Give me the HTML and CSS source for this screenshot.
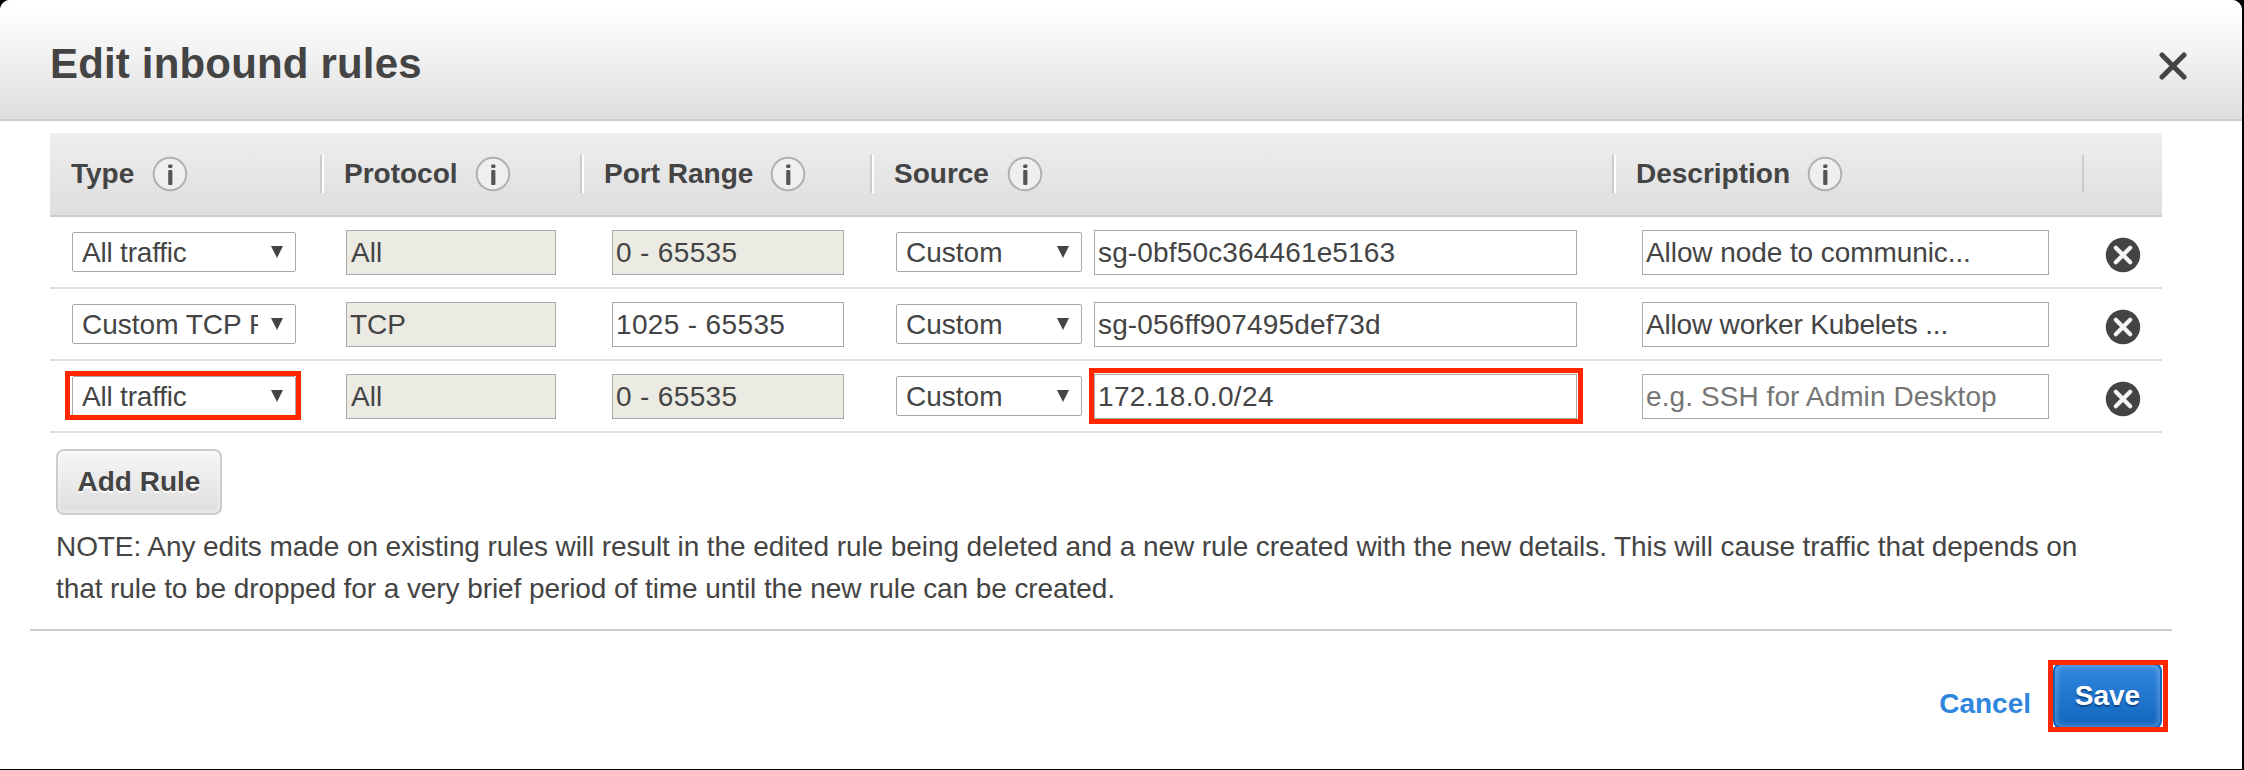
FILE: index.html
```html
<!DOCTYPE html>
<html lang="en">
<head>
<meta charset="utf-8">
<title>Edit inbound rules</title>
<link rel="stylesheet" href="styles.css">
</head>
<body>
<svg class="defs" width="0" height="0" aria-hidden="true">
  <symbol id="info" viewBox="0 0 36 36">
    <circle cx="18" cy="18" r="16.3" fill="#efefef" stroke="#b0b0b0" stroke-width="2"/>
    <rect x="16.2" y="8.5" width="4.2" height="3.6" rx="1" fill="#555"/>
    <rect x="16.2" y="14" width="4.2" height="15" rx="1" fill="#555"/>
  </symbol>
  <symbol id="remove" viewBox="0 0 36 36">
    <circle cx="18" cy="18" r="17.2" fill="#444"/>
    <path d="M10.8 10.8L25.2 25.2M25.2 10.8L10.8 25.2" stroke="#f4f4f4" stroke-width="4.2" stroke-linecap="round"/>
  </symbol>
  <symbol id="arrow" viewBox="0 0 12 12">
    <path d="M0 0H12L6 12Z" fill="#444"/>
  </symbol>
</svg>
<div class="dialog">
  <header class="dialog-header">
    <h1 class="title">Edit inbound rules</h1>
    <svg class="close" viewBox="0 0 28 28"><path d="M3 3L25 25M25 3L3 25" stroke="#444" stroke-width="5" stroke-linecap="round"/></svg>
  </header>
  <main class="dialog-body">
    <div class="table">
      <div class="row head">
        <div class="th th-first"><span>Type</span><svg class="info"><use href="#info"/></svg></div>
        <div class="th"><span>Protocol</span><svg class="info"><use href="#info"/></svg></div>
        <div class="th"><span>Port Range</span><svg class="info"><use href="#info"/></svg></div>
        <div class="th th-source"><span>Source</span><svg class="info"><use href="#info"/></svg></div>
        <div class="th th-last"><span>Description</span><svg class="info"><use href="#info"/></svg></div>
        <div></div>
      </div>
      <div class="row">
        <div class="cell"><div class="select type"><span class="value tight">All traffic</span><svg class="arrow"><use href="#arrow"/></svg></div></div>
        <div class="cell"><div class="input disabled all">All</div></div>
        <div class="cell port"><div class="input disabled">0 - 65535</div></div>
        <div class="cell source"><div class="select custom"><span class="value">Custom</span><svg class="arrow"><use href="#arrow"/></svg></div><div class="input group">sg-0bf50c364461e5163</div></div>
        <div class="cell desc"><div class="input">Allow node to communic...</div></div>
        <div class="cell delete"><svg class="remove"><use href="#remove"/></svg></div>
      </div>
      <div class="row">
        <div class="cell"><div class="select type"><span class="value">Custom TCP Rule</span><svg class="arrow"><use href="#arrow"/></svg></div></div>
        <div class="cell"><div class="input disabled">TCP</div></div>
        <div class="cell port"><div class="input">1025 - 65535</div></div>
        <div class="cell source"><div class="select custom"><span class="value">Custom</span><svg class="arrow"><use href="#arrow"/></svg></div><div class="input group">sg-056ff907495def73d</div></div>
        <div class="cell desc"><div class="input narrow">Allow worker Kubelets ...</div></div>
        <div class="cell delete"><svg class="remove"><use href="#remove"/></svg></div>
      </div>
      <div class="row">
        <div class="cell"><div class="select type"><span class="value tight">All traffic</span><svg class="arrow"><use href="#arrow"/></svg><i class="mark mark-type"></i></div></div>
        <div class="cell"><div class="input disabled all">All</div></div>
        <div class="cell port"><div class="input disabled">0 - 65535</div></div>
        <div class="cell source"><div class="select custom"><span class="value">Custom</span><svg class="arrow"><use href="#arrow"/></svg></div><div class="input cidr">172.18.0.0/24<i class="mark mark-source"></i></div></div>
        <div class="cell desc"><div class="input placeholder">e.g. SSH for Admin Desktop</div></div>
        <div class="cell delete"><svg class="remove"><use href="#remove"/></svg></div>
      </div>
    </div>
    <button class="add">Add Rule</button>
    <p class="note">NOTE: Any edits made on existing rules will result in the edited rule being deleted and a new rule created with the new details. This will cause traffic that depends on<br>that rule to be dropped for a very brief period of time until the new rule can be created.</p>
  </main>
  <footer class="dialog-footer">
    <a class="cancel">Cancel</a>
    <div class="save-wrap"><button class="save">Save</button><i class="mark mark-save"></i></div>
  </footer>
</div>
</body>
</html>
```
FILE: styles.css
```css
* { box-sizing: border-box; }
body {
  margin: 0;
  height: 770px;
  overflow: hidden;
  background: #000;
  color: #444;
  font: 28px/32px "Liberation Sans", Arial, sans-serif;
}
.defs { position: absolute; }
.dialog {
  width: 2242px;
  height: 769px;
  background: #fff;
  border-radius: 10px 10px 0 0;
  overflow: hidden;
}
.dialog-header {
  display: flex;
  justify-content: space-between;
  align-items: flex-start;
  height: 121px;
  padding: 40px 55px 0 50px;
  border-bottom: 2px solid #ccc;
  background: linear-gradient(#fff 8%, #dfdfdf);
}
.title { margin: 0; font-size: 42px; line-height: 48px; font-weight: bold; letter-spacing: .17px; }
.close { width: 28px; height: 28px; margin-top: 12px; }
.dialog-body { padding: 12px 80px 0 50px; }
.row {
  display: grid;
  grid-template-columns: 274px 260px 290px 742px 468px 78px;
  height: 72px;
  border-bottom: 2px solid #dfdfdf;
}
.head {
  height: 84px;
  align-items: center;
  border-bottom-color: #ccc;
  background: linear-gradient(#eee, #dedede);
}
.th {
  display: flex;
  align-items: center;
  gap: 17px;
  height: 38px;
  margin-bottom: 1px;
  padding-left: 20px;
  border-right: 2px solid #fff;
  box-shadow: inset -2px 0 #ccc;
  font-weight: bold;
}
.th-first { padding-left: 21px; gap: 18px; }
.th-source { gap: 18px; }
.th-last { border-right: 0; }
.info, .remove { width: 36px; height: 36px; }
.cell { display: flex; align-items: flex-start; padding: 13px 28px 0 22px; }
.port { padding-left: 28px; padding-right: 30px; }
.source { gap: 12px; padding-right: 39px; }
.desc { padding-left: 26px; padding-right: 35px; }
.delete { padding: 20px 0 0 21px; }
.input, .select {
  position: relative;
  border: 1px solid #a9a9a9;
  background: #fff;
  white-space: nowrap;
}
.input { flex: 1; height: 45px; padding: 6px 3px; }
.disabled { background: #ebebe4; }
.all { padding-left: 4px; }
.port .input, .cidr { letter-spacing: .35px; }
.group { letter-spacing: .15px; }
.desc .input { letter-spacing: -.08px; }
.desc .narrow { letter-spacing: -.18px; }
.desc .placeholder { color: #757575; letter-spacing: .08px; }
.select {
  display: flex;
  justify-content: space-between;
  height: 40px;
  margin-top: 2px;
  padding: 4px 12px 0 9px;
  border-radius: 2px;
}
.type { width: 224px; }
.custom { width: 186px; }
.value { max-width: 176px; overflow: hidden; }
.tight { letter-spacing: -.2px; }
.arrow { width: 12px; height: 12px; margin-top: 9px; flex: none; }
.mark { position: absolute; border: 5px solid #ff2600; }
.mark-type { inset: -6px -6px -5px -8px; }
.mark-source { inset: -7px -7px -6px -6px; }
.mark-save { inset: -3px -6px -3px -5px; }
.add, .save {
  display: block;
  height: 66px;
  padding: 0;
  border-radius: 8px;
  font: bold 28px/32px "Liberation Sans", Arial, sans-serif;
}
.add {
  width: 166px;
  margin: 16px 0 0 6px;
  padding-bottom: 1px;
  border: 2px solid #ccc;
  background: linear-gradient(#f6f6f6, #dedede);
  box-shadow: inset 0 0 5px rgba(255, 255, 255, .8);
  color: #444;
  text-shadow: 0 2px #fff;
}
.note { margin: 11px 0 0 6px; line-height: 42px; white-space: nowrap; letter-spacing: -.08px; }
.dialog-footer {
  display: flex;
  justify-content: flex-end;
  margin: 19px 70px 0 30px;
  padding: 32px 10px 0 0;
  border-top: 2px solid #ccc;
}
.cancel { margin: 25px 22px 0 0; color: #2e86de; font-weight: bold; }
.save-wrap { position: relative; }
.save {
  width: 109px;
  padding-bottom: 0;
  border: 2px solid #1166bb;
  background: linear-gradient(#3287df, #1165bd);
  box-shadow: inset 0 0 7px rgba(255, 255, 255, .4);
  color: #fff;
  text-shadow: 0 2px 1px #11498a;
}
```
